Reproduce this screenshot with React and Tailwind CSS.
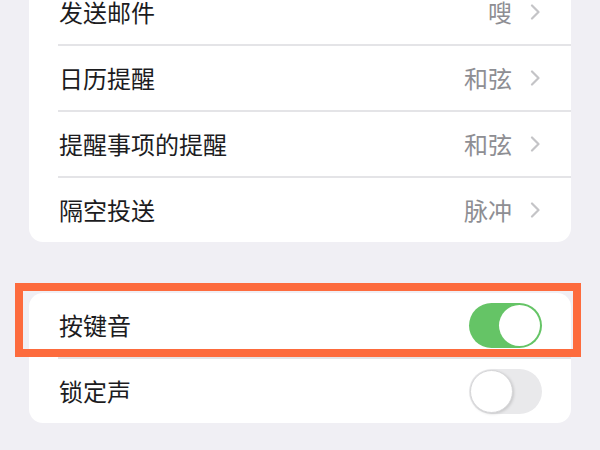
import React from "react";

const FONT = { fontFamily: '"Noto Sans CJK SC", "Noto Sans", sans-serif' };

const alertRows = [
  { label: "发送邮件", value: "嗖" },
  { label: "日历提醒", value: "和弦" },
  { label: "提醒事项的提醒", value: "和弦" },
  { label: "隔空投送", value: "脉冲" },
];

function Chevron() {
  return (
    <svg width="11" height="16" viewBox="0 0 11 16" fill="none" className="ml-[18px]">
      <path d="M2 1.5 L8.5 8 L2 14.5" stroke="#c4c4c7" strokeWidth="2.2" strokeLinecap="round" strokeLinejoin="round" />
    </svg>
  );
}

function Toggle({ on }) {
  return (
    <div
      className={[
        "w-[73px] h-[45px] rounded-full flex items-center",
        on ? "bg-[#65c466] justify-end p-[2px]" : "bg-[#e9e9eb] justify-start p-[1px]",
      ].join(" ")}
    >
      <div
        className={[
          "rounded-full bg-white",
          on ? "w-[41px] h-[41px]" : "w-[43px] h-[43px] shadow-[1px_1px_3px_rgba(0,0,0,0.15)] border border-[#d6d6d8]",
        ].join(" ")}
      />
    </div>
  );
}

function Separator() {
  return <div className="h-[2px] ml-[29px] bg-[#e4e4e7]" />;
}

export default function App() {
  return (
    <div className="w-[600px] h-[450px] overflow-hidden bg-[#f0eff4] text-[#1c1c1e]" style={FONT}>
      <div className="mt-[-20px] mx-[29px] bg-white rounded-[14px] overflow-hidden">
        {alertRows.map((row, i) => (
          <div key={row.label}>
            {i > 0 && <Separator />}
            <div className="h-[64px] flex items-center pl-[30px] pr-[30px]">
              <span className="text-[24px] leading-none flex-1">{row.label}</span>
              <span className="text-[24px] leading-none text-[#8e8e93]">{row.value}</span>
              <Chevron />
            </div>
          </div>
        ))}
      </div>

      <div className="relative mt-[51px] mx-[29px] bg-white rounded-[14px]">
        <div className="h-[64px] flex items-center pl-[30px] pr-[29px]">
          <span className="text-[24px] leading-none flex-1">按键音</span>
          <Toggle on />
        </div>
        <Separator />
        <div className="h-[64px] flex items-center pl-[30px] pr-[29px]">
          <span className="text-[24px] leading-none flex-1">锁定声</span>
          <Toggle on={false} />
        </div>
        <div className="absolute left-[-14px] top-[-10px] w-[566px] h-[74px] border-[8px] border-[#fd6b3d] pointer-events-none" />
      </div>
    </div>
  );
}
